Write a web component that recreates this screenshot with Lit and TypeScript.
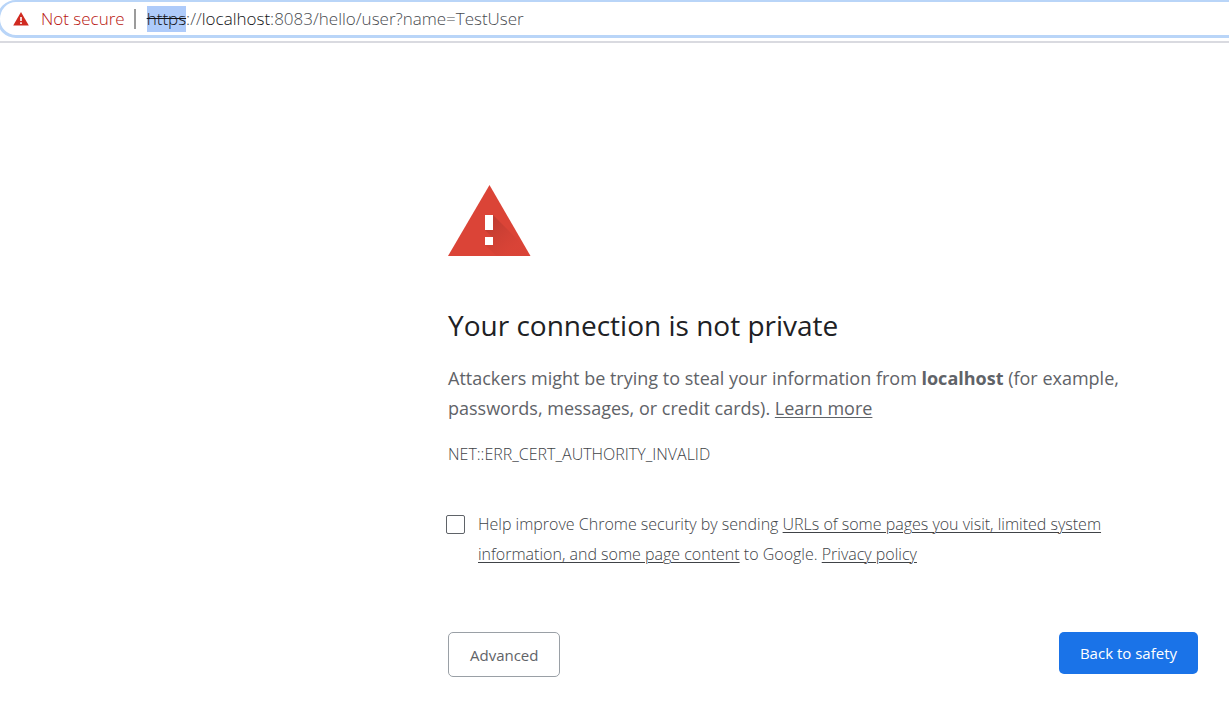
import { LitElement, html, css } from "lit";
import { customElement, state } from "lit/decorators.js";

@customElement("address-bar")
class AddressBar extends LitElement {
  static styles = css`
    :host {
      display: block;
      border-bottom: 2px solid #d9dae0;
      padding-bottom: 3px;
      overflow: hidden;
    }
    .pill {
      display: flex;
      align-items: center;
      box-sizing: border-box;
      height: 38px;
      margin: 0 -24px 0 -3px;
      padding-left: 13px;
      border: 2px solid #b9d5f8;
      border-width: 2px 2px 3px 3px;
      border-radius: 19px;
      font-size: 17px;
      font-weight: 300;
      line-height: 26px;
      white-space: nowrap;
    }
    .status {
      display: flex;
      align-items: center;
      gap: 12px;
      border: 0;
      padding: 0;
      background: none;
      color: #b8140f;
      font: inherit;
    }
    .icon {
      width: 16px;
      height: 14px;
    }
    .divider {
      width: 2px;
      height: 20px;
      margin: 0 11px 0 9px;
      background: #9b9b9b;
    }
    .url {
      color: #484b50;
      outline: none;
    }
    .scheme {
      display: inline-block;
      background: #aecbfa;
      color: #101114;
      text-decoration: line-through;
    }
    .host {
      color: #101114;
    }
  `;

  render() {
    return html`
      <div class="pill">
        <button class="status" type="button">
          <svg class="icon" viewBox="0 0 16 14" aria-hidden="true">
            <path d="M8 0 L15.8 13.5 H0.2 Z" fill="#d02a20" />
            <path d="M7.2 5h1.6v4H7.2zM7.2 10.2h1.6v1.7H7.2z" fill="#fff" />
          </svg>
          <span>Not secure</span>
        </button>
        <span class="divider"></span>
        <div class="url" role="textbox" aria-label="Address" contenteditable="true" spellcheck="false"><span class="scheme">https</span>://<span class="host">localhost</span>:8083/hello/user?name=TestUser</div>
      </div>
    `;
  }
}

@customElement("app-root")
class AppRoot extends LitElement {
  @state() private reporting = false;

  static styles = css`
    :host {
      display: block;
      min-height: 100vh;
      background: #fff;
      color: #5f6368;
      font-family: "Segoe UI", "Open Sans", "Noto Sans", sans-serif;
    }
    .content {
      box-sizing: border-box;
      max-width: 750px;
      margin: 142px 31px 40px auto;
    }
    .warning {
      display: block;
      width: 83px;
      height: 72px;
    }
    h1 {
      margin: 47px 0 17px;
      color: #202124;
      font-size: 28px;
      font-weight: 400;
      line-height: 42px;
    }
    p {
      margin: 0;
      max-width: 690px;
      font-size: 18px;
      line-height: 30px;
    }
    a {
      color: inherit;
      text-underline-offset: 2px;
      text-decoration-thickness: 1px;
    }
    .code,
    .report {
      color: #404347;
      font-size: 16px;
      font-weight: 300;
    }
    .code {
      margin-top: 19px;
      line-height: 24px;
    }
    .report {
      display: flex;
      gap: 13px;
      margin-top: 43px;
      margin-left: -2px;
      line-height: 30px;
    }
    .box {
      appearance: none;
      flex: none;
      box-sizing: border-box;
      width: 19px;
      height: 19px;
      margin: 6px 0 0;
      border: 1px solid #5f6368;
      border-radius: 2px;
      background: #fff;
    }
    .box:checked {
      background: #1a73e8;
    }
    .report label {
      max-width: 660px;
    }
    .actions {
      display: flex;
      justify-content: space-between;
      align-items: flex-start;
      margin-top: 63px;
    }
    .button {
      box-sizing: border-box;
      height: 42px;
      padding: 0 21px;
      border: 0;
      border-radius: 5px;
      background: #1a73e8;
      color: #fff;
      font: inherit;
      font-size: 15px;
    }
    .outline {
      height: 45px;
      border: 1px solid #9aa0a6;
      background: #fff;
      color: #5f6368;
    }
  `;

  render() {
    return html`
      <address-bar></address-bar>
      <main class="content">
        <svg class="warning" viewBox="0 0 83 72" aria-hidden="true">
          <defs>
            <linearGradient id="shade" gradientUnits="userSpaceOnUse" x1="41" y1="38" x2="64" y2="64">
              <stop offset="0" stop-color="#b93a30" stop-opacity=".8" />
              <stop offset="1" stop-color="#c93e33" stop-opacity=".1" />
            </linearGradient>
          </defs>
          <path d="M41.5 0 L82.5 71 H0 Z" fill="#db4437" />
          <path d="M45 30 L73 58 L80.5 71 H48.5 L37 60 H45 V53 L37 45 H45 Z" fill="url(#shade)" />
          <path d="M37 30h8v15h-8zM37 52h8v8h-8z" fill="#fff" />
        </svg>
        <h1>Your connection is not private</h1>
        <p>
          Attackers might be trying to steal your information from <strong>localhost</strong> (for example,
          passwords, messages, or credit cards). <a href="#learn-more">Learn more</a>
        </p>
        <div class="code">NET::ERR_CERT_AUTHORITY_INVALID</div>
        <div class="report">
          <input
            id="report"
            class="box"
            type="checkbox"
            .checked=${this.reporting}
            @change=${() => (this.reporting = !this.reporting)}
          />
          <label for="report"
            >Help improve Chrome security by sending
            <a href="#report-contents">URLs of some pages you visit, limited system information, and some page content</a>
            to Google. <a href="#privacy">Privacy policy</a></label
          >
        </div>
        <div class="actions">
          <button class="button outline" type="button">Advanced</button>
          <button class="button" type="button">Back to safety</button>
        </div>
      </main>
    `;
  }
}
